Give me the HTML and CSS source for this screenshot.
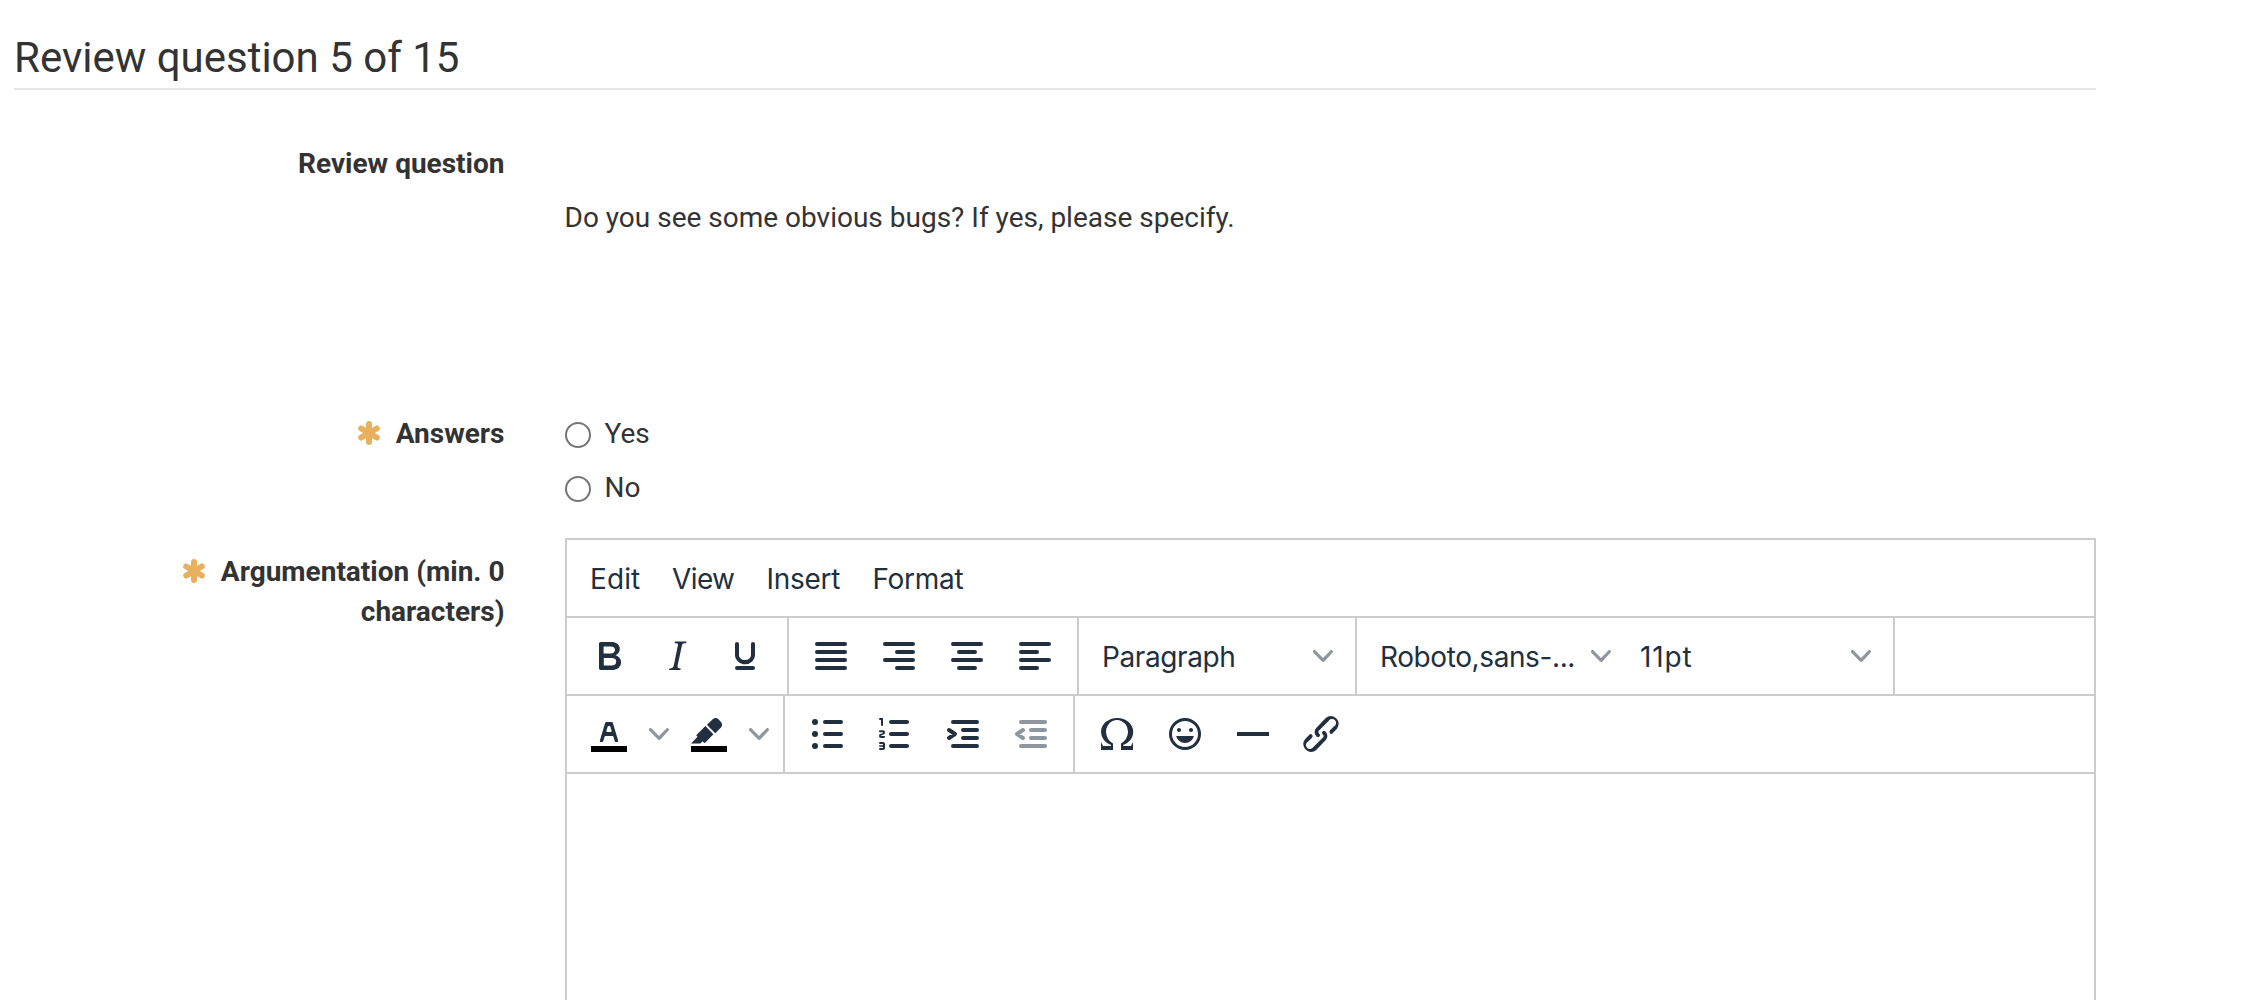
FILE: index.html
```html
<!DOCTYPE html>
<html lang="en">
<head>
<meta charset="utf-8">
<title>Review question 5 of 15</title>
<link rel="stylesheet" href="styles.css">
</head>
<body>
<svg class="defs" aria-hidden="true">
  <symbol id="chevron" viewBox="0 0 10 10"><path d="M8.7 2.2c.3-.3.8-.3 1 0 .4.4.4.9 0 1.2L5.7 7.8c-.3.3-.9.3-1.2 0L.2 3.4a.8.8 0 0 1 0-1.2c.3-.3.8-.3 1.1 0L5 6l3.7-3.8z"/></symbol>
  <symbol id="required" viewBox="0 0 22 24"><path d="M11 3v18M3.2 7.5l15.6 9M18.8 7.5l-15.6 9" fill="none" stroke="currentColor" stroke-width="6" stroke-linecap="round"/></symbol>
</svg>
<main class="page">
  <h1 class="title">Review question 5 of 15</h1>
  <form class="form">
    <div class="row row-question">
      <div class="label">Review question</div>
      <p class="question">Do you see some obvious bugs? If yes, please specify.</p>
    </div>
    <div class="row row-answers">
      <div class="label"><svg class="required"><use href="#required"/></svg>Answers</div>
      <div class="answers">
        <label class="answer"><input class="radio" type="radio" name="answer">Yes</label>
        <label class="answer"><input class="radio" type="radio" name="answer">No</label>
      </div>
    </div>
    <div class="row row-argumentation">
      <div class="label label-argumentation"><svg class="required"><use href="#required"/></svg>Argumentation (min. 0 characters)</div>
      <div class="editor">
        <div class="menubar"><span class="menu-edit">Edit</span><span class="menu-view">View</span><span>Insert</span><span>Format</span></div>
        <div class="toolbar">
          <div class="group">
            <span class="btn"><svg class="icon" viewBox="0 0 24 24"><path fill-rule="evenodd" d="M7.8 19c-.3 0-.5 0-.6-.2l-.2-.5V5.7c0-.2 0-.4.2-.5l.6-.2h5c1.5 0 2.7.3 3.5 1 .7.6 1.1 1.4 1.1 2.5a3 3 0 0 1-.6 1.9c-.4.6-1 1-1.6 1.2.4.1.9.3 1.3.6s.8.7 1 1.2c.4.4.5 1 .5 1.6 0 1.3-.4 2.3-1.3 3-.8.7-2.1 1-3.8 1H7.8zm5-8.3c.6 0 1.2-.1 1.6-.5.4-.3.6-.7.6-1.3 0-1.1-.8-1.7-2.3-1.7H9.3v3.5h3.4zm.5 6c.7 0 1.3-.1 1.7-.4.4-.4.6-.9.6-1.5s-.2-1-.7-1.4c-.4-.3-1-.4-2-.4H9.4v3.8h4z"/></svg></span>
            <span class="btn"><svg class="icon" viewBox="0 0 24 24"><path d="M16.7 4.7l-.1.9h-.3c-.6 0-1 0-1.4.3-.3.3-.4.6-.5 1.1l-2.1 9.8v.6c0 .5.4.8 1.4.8h.2l-.2.8H8l.2-.8h.2c1.1 0 1.8-.5 2-1.5l2-9.8.1-.5c0-.6-.4-.8-1.4-.8h-.3l.2-.9h5.8z"/></svg></span>
            <span class="btn"><svg class="icon" viewBox="0 0 24 24"><path d="M16 5c.6 0 1 .4 1 1v5.5a4 4 0 0 1-.4 1.8l-1 1.4a5.3 5.3 0 0 1-5.5 1 5 5 0 0 1-1.6-1c-.5-.4-.8-.9-1.1-1.4a4 4 0 0 1-.4-1.8V6c0-.6.4-1 1-1s1 .4 1 1v5.5c0 .3 0 .6.2 1l.6.7a3.3 3.3 0 0 0 2.2.8 3.4 3.4 0 0 0 2.2-.8c.3-.2.4-.5.6-.8l.2-.9V6c0-.6.4-1 1-1zM8 17h8c.6 0 1 .4 1 1s-.4 1-1 1H8a1 1 0 0 1 0-2z"/></svg></span>
          </div>
          <div class="group">
            <span class="btn"><svg class="icon line" viewBox="0 0 24 24"><path d="M5 6h14M5 10h14M5 14h14M5 18h14"/></svg></span>
            <span class="btn"><svg class="icon line" viewBox="0 0 24 24"><path d="M5 6h14M11 10h8M5 14h14M11 18h8"/></svg></span>
            <span class="btn"><svg class="icon line" viewBox="0 0 24 24"><path d="M5 6h14M8 10h8M5 14h14M8 18h8"/></svg></span>
            <span class="btn"><svg class="icon line" viewBox="0 0 24 24"><path d="M5 6h14M5 10h8M5 14h14M5 18h8"/></svg></span>
          </div>
          <div class="group">
            <span class="select"><span class="paragraph">Paragraph</span><svg class="chevron"><use href="#chevron"/></svg></span>
          </div>
          <div class="group">
            <span class="select"><span class="font-name">Roboto,sans-...</span><svg class="chevron"><use href="#chevron"/></svg></span>
            <span class="select"><span class="font-size">11pt</span><svg class="chevron"><use href="#chevron"/></svg></span>
          </div>
        </div>
        <div class="toolbar">
          <div class="group">
            <span class="btn"><svg class="icon" viewBox="0 0 24 24"><path class="swatch" d="M3 18h18v3H3z"/><path d="M8.7 16h-.8a.5.5 0 0 1-.5-.6l2.7-9c.1-.3.3-.4.5-.4h2.8c.2 0 .4.1.5.4l2.7 9a.5.5 0 0 1-.5.6h-.8a.5.5 0 0 1-.4-.4l-.7-2.2c0-.3-.3-.4-.5-.4h-3.4c-.2 0-.4.1-.5.4l-.7 2.2c0 .3-.2.4-.4.4zm2.6-7.6l-.6 2a.5.5 0 0 0 .5.6h1.6a.5.5 0 0 0 .5-.6l-.6-2c0-.3-.3-.4-.5-.4h-.4c-.2 0-.4.1-.5.4z"/></svg></span>
            <span class="drop"><svg class="chevron"><use href="#chevron"/></svg></span>
            <span class="btn"><svg class="icon" viewBox="0 0 24 24"><path class="swatch" d="M3 18h18v3H3z"/><path d="M7.7 16.7H3l3.3-3.3-.7-.8L10.2 8l4 4.1-4 4.2c-.2.2-.6.2-.8 0l-.6-.7-1.1 1.1zm5-7.5L11 7.4l3-2.9a2 2 0 0 1 2.6 0L18 6c.7.7.7 2 0 2.7l-2.9 2.9-1.8-1.8-.5-.6"/></svg></span>
            <span class="drop"><svg class="chevron"><use href="#chevron"/></svg></span>
          </div>
          <div class="group">
            <span class="btn"><svg class="icon line" viewBox="0 0 24 24"><path d="M11 6h8M11 12h8M11 18h8"/><g class="dots"><circle cx="6" cy="6" r="1.5"/><circle cx="6" cy="12" r="1.5"/><circle cx="6" cy="18" r="1.5"/></g></svg></span>
            <span class="btn"><svg class="icon" viewBox="0 0 24 24"><path d="M10 17h8c.6 0 1 .4 1 1s-.4 1-1 1h-8a1 1 0 0 1 0-2zm0-6h8c.6 0 1 .4 1 1s-.4 1-1 1h-8a1 1 0 0 1 0-2zm0-6h8c.6 0 1 .4 1 1s-.4 1-1 1h-8a1 1 0 1 1 0-2zM6 4v3.5c0 .3-.2.5-.5.5a.5.5 0 0 1-.5-.5V5h-.5a.5.5 0 0 1 0-1H6zm-1 8.8l.2.2h1.3c.3 0 .5.2.5.5s-.2.5-.5.5H4.9a1 1 0 0 1-.9-1V13c0-.4.3-.8.6-1l1.2-.4.2-.3a.2.2 0 0 0-.2-.2H4.5a.5.5 0 0 1-.5-.5c0-.3.2-.5.5-.5h1.6c.5 0 .9.4.9 1v.1c0 .4-.3.8-.6 1l-1.2.4-.2.3zM7 17v2c0 .6-.4 1-1 1H4.5a.5.5 0 0 1 0-1h1.2c.2 0 .3-.1.3-.3 0-.2-.1-.3-.3-.3H4.4a.4.4 0 1 1 0-.8h1.3c.2 0 .3-.1.3-.3 0-.2-.1-.3-.3-.3H4.5a.5.5 0 1 1 0-1H6c.6 0 1 .4 1 1z"/></svg></span>
            <span class="btn"><svg class="icon line" viewBox="0 0 24 24"><path d="M7 6h12M12 10h7M12 14h7M7 18h12M5 10l3 2-3 2"/></svg></span>
            <span class="btn disabled"><svg class="icon line" viewBox="0 0 24 24"><path d="M7 6h12M12 10h7M12 14h7M7 18h12M8 10l-3 2 3 2"/></svg></span>
          </div>
          <div class="group group-last">
            <span class="btn"><svg class="icon" viewBox="0 0 24 24"><path d="M15 18h4l1-2v4h-6v-3.3l1.4-1a6 6 0 0 0 1.8-2.9 6.3 6.3 0 0 0-.1-4.1 5.8 5.8 0 0 0-3-3.2c-.6-.3-1.3-.5-2.1-.5a5.1 5.1 0 0 0-3.9 1.8 6.3 6.3 0 0 0-1.3 6 6.2 6.2 0 0 0 1.8 3l1.4.9V20H4v-4l1 2h4v-.5l-2-1L5.4 15A6.5 6.5 0 0 1 4 11c0-1 .2-1.9.6-2.7A7 7 0 0 1 6.3 6C7.1 5.4 8 5 9 4.5c1-.3 2-.5 3.1-.5a8.8 8.8 0 0 1 5.7 2 7 7 0 0 1 1.7 2.3 6 6 0 0 1 .2 4.8c-.2.7-.6 1.3-1 1.9a7.6 7.6 0 0 1-3.6 2.5v.5z"/></svg></span>
            <span class="btn"><svg class="icon" viewBox="0 0 24 24"><path d="M9 11c.6 0 1-.4 1-1s-.4-1-1-1a1 1 0 0 0-1 1c0 .6.4 1 1 1zm6 0c.6 0 1-.4 1-1s-.4-1-1-1a1 1 0 0 0-1 1c0 .6.4 1 1 1zm-3 5.5c2.1 0 4-1.5 4.4-3.5H7.6c.5 2 2.3 3.5 4.4 3.5zM12 4a8 8 0 1 0 0 16 8 8 0 0 0 0-16zm0 14.5a6.5 6.5 0 1 1 0-13 6.5 6.5 0 0 1 0 13z"/></svg></span>
            <span class="btn"><svg class="icon" viewBox="0 0 24 24"><path d="M4 11h16v2H4z"/></svg></span>
            <span class="btn"><svg class="icon" viewBox="0 0 24 24"><path d="M6.2 12.3a1 1 0 0 1 1.4 1.4l-2 2a2 2 0 1 0 2.6 2.8l4.8-4.8a1 1 0 0 0 0-1.4 1 1 0 1 1 1.4-1.3 2.9 2.9 0 0 1 0 4L9.6 20a3.9 3.9 0 0 1-5.5-5.5l2-2zm11.6-.6a1 1 0 0 1-1.4-1.4l2-2a2 2 0 1 0-2.6-2.8L11 10.3a1 1 0 0 0 0 1.4A1 1 0 1 1 9.6 13a2.9 2.9 0 0 1 0-4L14.4 4a3.9 3.9 0 0 1 5.5 5.5l-2 2z"/></svg></span>
          </div>
        </div>
        <div class="content"></div>
      </div>
    </div>
  </form>
</main>
</body>
</html>
```

FILE: styles.css
```css
* { box-sizing: border-box; }
body {
  margin: 0;
  background: #fff;
  color: #333;
  font: 28px/40px Roboto, sans-serif;
}
.defs { display: none; }
.page {
  display: flex;
  flex-direction: column;
  width: 2096px;
  height: 1000px;
  padding-left: 14px;
  overflow: hidden;
}
.title {
  margin: 0;
  height: 90px;
  padding-top: 35px;
  border-bottom: 2px solid #e5e5e5;
  font-size: 42px;
  line-height: 46px;
  font-weight: 400;
}
.form {
  flex: 1;
  display: flex;
  flex-direction: column;
  padding-top: 54px;
}
.row {
  display: grid;
  grid-template-columns: 490.5px 1531px;
  column-gap: 60.5px;
}
.row-question { height: 270px; }
.row-answers { height: 124px; }
.row-argumentation { flex: 1; }
.label { font-weight: 700; text-align: right; }
.label-argumentation { padding: 14px 0 0 150px; }
.required {
  width: 22px;
  height: 24px;
  margin-right: 15.5px;
  vertical-align: -2px;
  color: #e8b05c;
}
.question { margin: 54px 0 0 -0.5px; }
.answers { display: flex; flex-direction: column; gap: 14px; }
.answer { display: flex; align-items: center; gap: 13.5px; }
.radio {
  appearance: none;
  width: 26px;
  height: 26px;
  margin: 2px 0 0;
  border: 2px solid #767676;
  border-radius: 50%;
}

.editor {
  display: flex;
  flex-direction: column;
  border: 2px solid #ccc;
  border-bottom: 0;
  color: #222f3e;
  font-family: Inter, sans-serif;
}
.menubar {
  display: grid;
  grid-template-columns: 82px 94.5px 106px 120px;
  height: 78px;
  padding-left: 23px;
  border-bottom: 2px solid #ccc;
  line-height: 78px;
  letter-spacing: -0.3px;
}
.menu-edit { letter-spacing: 0.1px; }
.menu-view { letter-spacing: -0.6px; }
.toolbar {
  display: flex;
  height: 78px;
  border-bottom: 2px solid #ccc;
}
.group {
  display: flex;
  align-items: center;
  padding: 0 8px;
  border-right: 2px solid #ccc;
}
.group-last { border-right: 0; }
.btn { display: flex; justify-content: center; width: 68px; }
.drop { display: flex; justify-content: center; width: 32px; }
.icon { width: 48px; height: 48px; fill: #222f3e; }
.line { fill: none; stroke: #222f3e; stroke-width: 2; stroke-linecap: round; stroke-linejoin: round; }
.dots { fill: #222f3e; stroke: none; }
.swatch { fill: #000; }
.disabled { opacity: .5; }
.chevron { width: 20px; height: 20px; fill: #222f3e; opacity: .5; }
.select {
  display: flex;
  align-items: center;
  justify-content: space-between;
  width: 260px;
  padding: 0 14px 0 15px;
  white-space: nowrap;
  letter-spacing: -0.4px;
}
.select > span { padding-top: 2px; }
.font-size { letter-spacing: 0.9px; }
.content { flex: 1; }
```
